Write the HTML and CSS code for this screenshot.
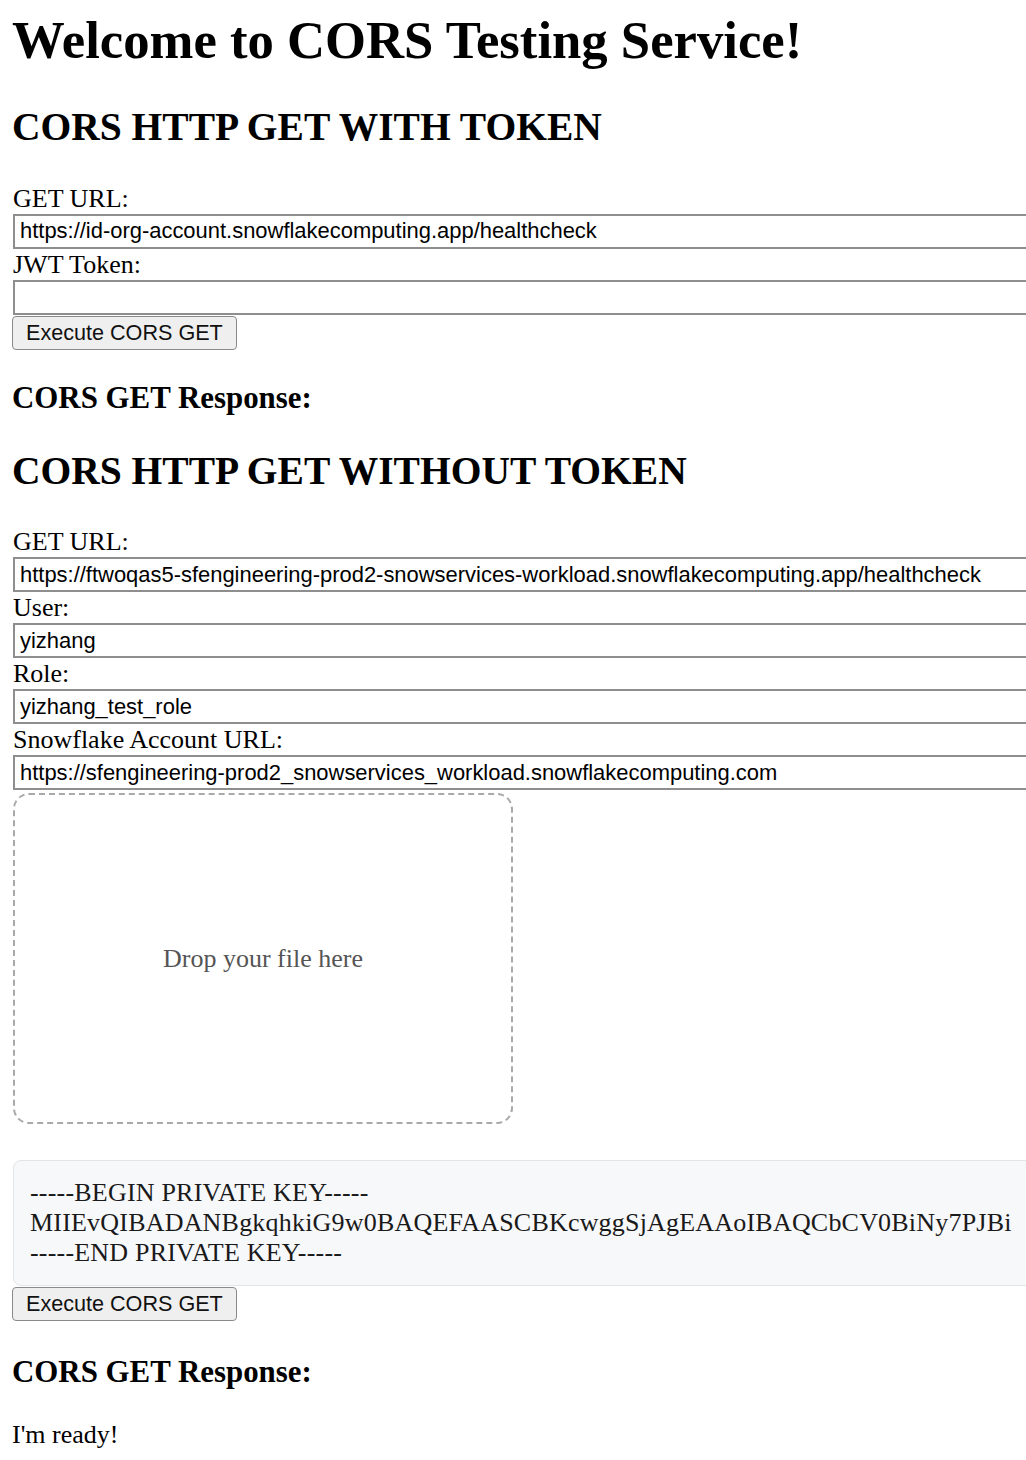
FILE: index.html
```html
<!DOCTYPE html>
<html lang="en">
<head>
<meta charset="utf-8">
<title>CORS Testing Service</title>
<link rel="stylesheet" href="styles.css">
</head>
<body>
<div class="page">
  <h1 class="title">Welcome to CORS Testing Service!</h1>

  <section class="block">
    <h2 class="section-title">CORS HTTP GET WITH TOKEN</h2>
    <form class="form">
      <label class="field-label" for="url1">GET URL:</label>
      <input class="field" id="url1" type="text" value="https://id-org-account.snowflakecomputing.app/healthcheck">
      <label class="field-label" for="jwt">JWT Token:</label>
      <input class="field" id="jwt" type="text" value="">
      <button class="btn" type="button">Execute CORS GET</button>
    </form>
    <h3 class="resp-title">CORS GET Response:</h3>
    <div class="resp"></div>
  </section>

  <section class="block">
    <h2 class="section-title section-title-second">CORS HTTP GET WITHOUT TOKEN</h2>
    <form class="form">
      <label class="field-label" for="url2">GET URL:</label>
      <input class="field" id="url2" type="text" value="https://ftwoqas5-sfengineering-prod2-snowservices-workload.snowflakecomputing.app/healthcheck">
      <label class="field-label" for="user">User:</label>
      <input class="field" id="user" type="text" value="yizhang">
      <label class="field-label" for="role">Role:</label>
      <input class="field" id="role" type="text" value="yizhang_test_role">
      <label class="field-label" for="acct">Snowflake Account URL:</label>
      <input class="field" id="acct" type="text" value="https://sfengineering-prod2_snowservices_workload.snowflakecomputing.com">
      <div class="dropzone">Drop your file here</div>
      <div class="keybox">
        <div class="key-line">-----BEGIN PRIVATE KEY-----</div>
        <div class="key-line">MIIEvQIBADANBgkqhkiG9w0BAQEFAASCBKcwggSjAgEAAoIBAQCbCV0BiNy7PJBi</div>
        <div class="key-line">-----END PRIVATE KEY-----</div>
      </div>
      <button class="btn" type="button">Execute CORS GET</button>
    </form>
    <h3 class="resp-title resp-title-last">CORS GET Response:</h3>
    <p class="resp-text">I'm ready!</p>
  </section>
</div>
</body>
</html>
```

FILE: styles.css
```css
html, body {
  margin: 0;
  padding: 0;
  background: #ffffff;
}

body {
  overflow: hidden;
  font-family: "Liberation Serif", "Times New Roman", serif;
  font-size: 26px;
  line-height: 30px;
  color: #000000;
}

.page {
  padding: 0 0 0 13px;
  overflow: hidden;
}

.title {
  font-size: 52.7px;
  line-height: 60px;
  font-weight: bold;
  margin: 10px 0 35px -1px;
}

.section-title {
  font-size: 39.5px;
  line-height: 45px;
  font-weight: bold;
  margin: 0 0 32.6px -1px;
}

.section-title-second {
  margin-top: 33.7px;
}

.form {
  display: flex;
  flex-direction: column;
  align-items: flex-start;
  margin: 0;
}

.field-label {
  display: block;
  line-height: 31px;
  height: 31px;
}

.field {
  box-sizing: border-box;
  width: calc(100% + 40px);
  height: 35px;
  margin: 0;
  padding: 0 5px;
  border: 2px solid #8e8e8e;
  border-radius: 0;
  background: #ffffff;
  font-family: "Liberation Sans", Arial, sans-serif;
  font-size: 21.95px;
  color: #000000;
  outline: none;
}

.btn {
  box-sizing: border-box;
  height: 34px;
  margin: 1px 0 0 -1px;
  padding: 0 13px;
  border: 1px solid #8a8a8a;
  border-radius: 4px;
  background: #efefef;
  font-family: "Liberation Sans", Arial, sans-serif;
  font-size: 21.6px;
  color: #111111;
}

.resp-title {
  font-size: 30.9px;
  line-height: 35px;
  font-weight: bold;
  margin: 30.4px 0 0 -1px;
}

.resp-title-last {
  margin-top: 33px;
}

.resp {
  margin: 0;
}

.resp-text {
  margin: 30.4px 0 0 -1px;
  line-height: 30px;
}

.dropzone {
  box-sizing: border-box;
  width: 500px;
  height: 331px;
  margin-top: 3px;
  border: 2px dashed #a9a9a9;
  border-radius: 16px;
  display: flex;
  align-items: center;
  justify-content: center;
  color: #555555;
}

.keybox {
  box-sizing: border-box;
  width: calc(100% + 40px);
  margin-top: 36px;
  padding: 17px 16px;
  border: 1px solid #e3e4e6;
  border-radius: 8px;
  background: #f7f8fa;
  color: #1a1a1a;
}

.key-line {
  line-height: 30px;
  white-space: nowrap;
  letter-spacing: 0.2px;
}
```
